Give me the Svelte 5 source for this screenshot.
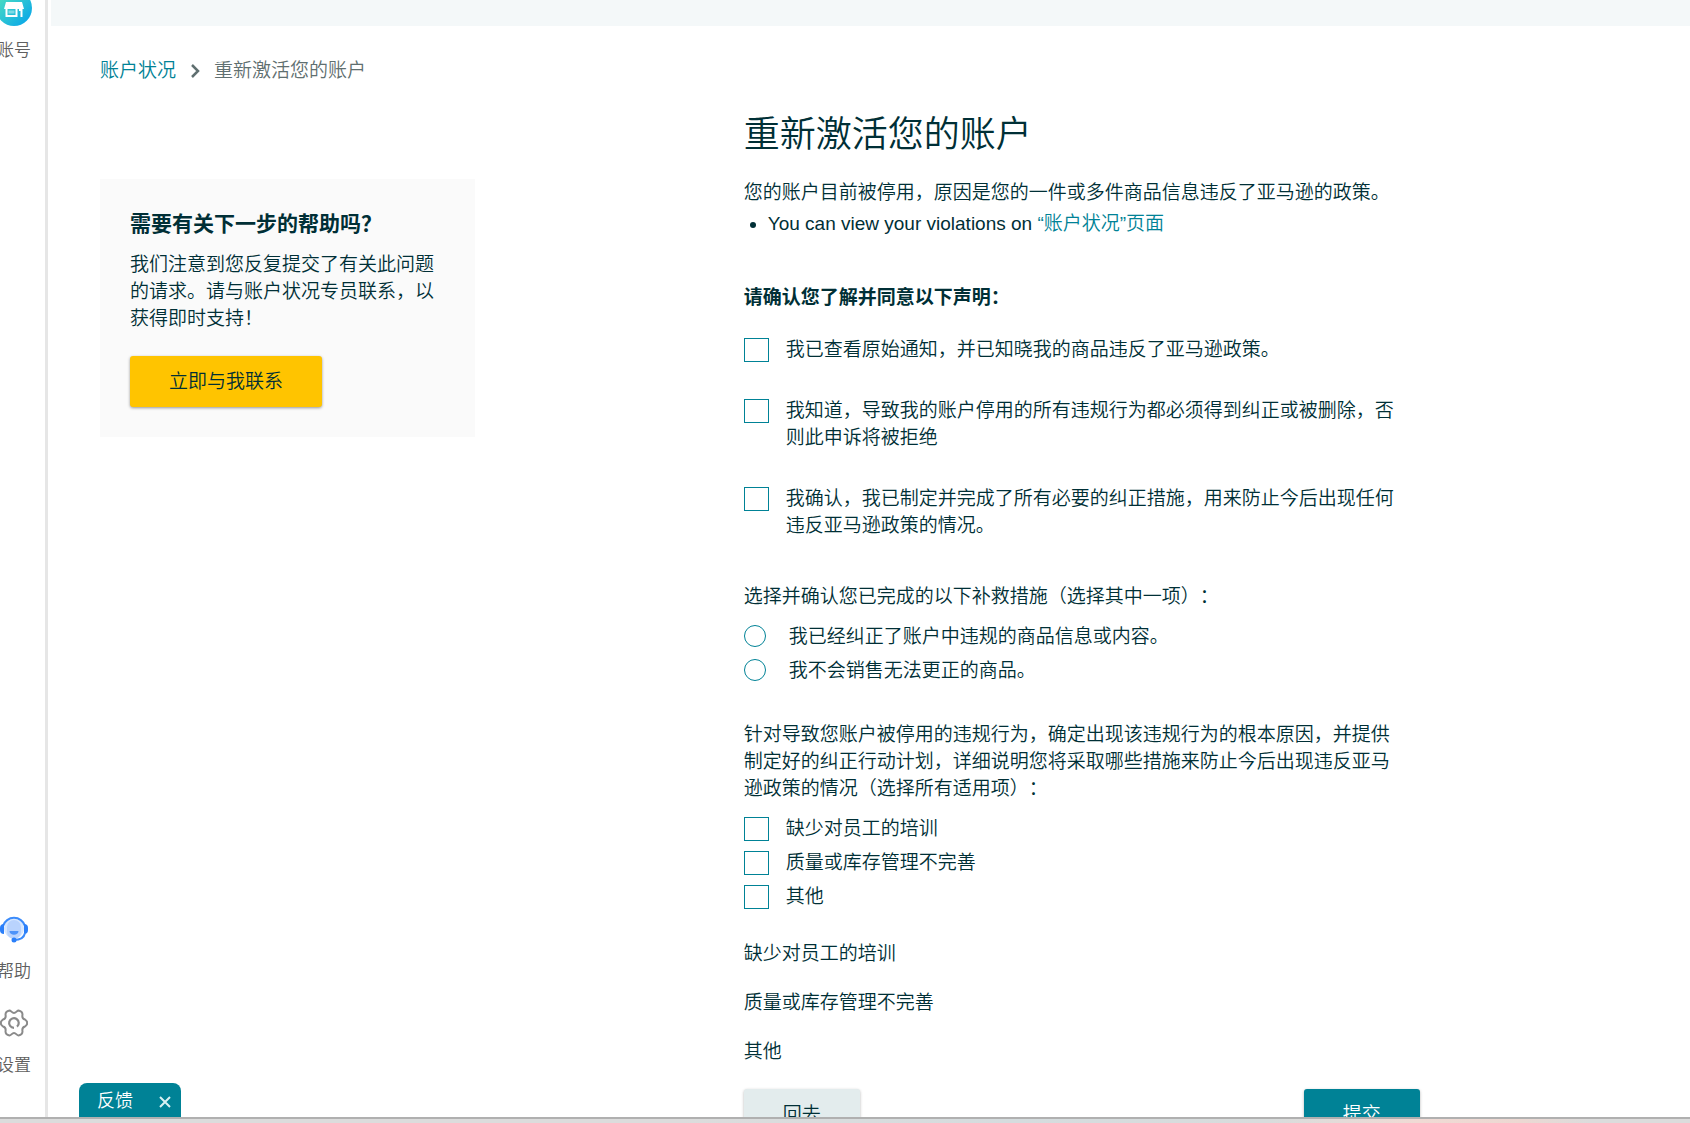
<script lang="ts">
	interface Option {
		id: string;
		text: string;
		checked: boolean;
	}

	let statements: Option[] = $state([
		{ id: 'reviewed', text: '我已查看原始通知，并已知晓我的商品违反了亚马逊政策。', checked: false },
		{
			id: 'corrected',
			text: '我知道，导致我的账户停用的所有违规行为都必须得到纠正或被删除，否则此申诉将被拒绝',
			checked: false
		},
		{
			id: 'prevented',
			text: '我确认，我已制定并完成了所有必要的纠正措施，用来防止今后出现任何违反亚马逊政策的情况。',
			checked: false
		}
	]);

	let causes: Option[] = $state([
		{ id: 'training', text: '缺少对员工的培训', checked: false },
		{ id: 'inventory', text: '质量或库存管理不完善', checked: false },
		{ id: 'other', text: '其他', checked: false }
	]);

	const remedies = [
		{ id: 'fixed', text: '我已经纠正了账户中违规的商品信息或内容。' },
		{ id: 'stopped', text: '我不会销售无法更正的商品。' }
	];

	let remedy = $state('');
	let showFeedback = $state(true);
</script>

<div class="app">
	<div class="workspace">
		<nav class="sidebar">
			<a href="#account">
				<svg class="account" viewBox="0 0 36 36" aria-hidden="true">
					<defs>
						<linearGradient id="shop" x1="0" y1="0" x2="1" y2="1">
							<stop offset="0.1" stop-color="#4fe0c0" />
							<stop offset="0.9" stop-color="#0aa8e8" />
						</linearGradient>
					</defs>
					<circle cx="18" cy="18" r="18" fill="url(#shop)" />
					<path d="M10 12h16l2 7H8z" fill="#fff" />
					<path d="M9.500 18h2v7h8v-6h2v8h-12zM23 18h3.500v9h-2v-6h-1.500z" fill="#fff" />
					<path d="M12.500 20.500h6v3h-6z" fill="#fff" opacity="0.4" />
				</svg>
				<span>账号</span>
			</a>
			<a href="#help" class="push">
				<svg viewBox="0 0 28 28" aria-hidden="true">
					<circle cx="14" cy="13.500" r="10" fill="#d6e6fe" />
					<path d="M7 12a7 7 0 0 1 14 0v5a7 7 0 0 1-14 0z" fill="#b9d3fd" />
					<path d="M3 11a11.500 11.500 0 0 1 22 0" fill="none" stroke="#3b8bfb" stroke-width="2" />
					<path d="M4 9v10a4 4 0 0 1-4-4v-2a4 4 0 0 1 4-4z" fill="#2b7ff9" />
					<path d="M24 9v10a4 4 0 0 0 4-4v-2a4 4 0 0 0-4-4z" fill="#2b7ff9" />
					<path d="M9.500 16h9c0 5-9 5-9 0z" fill="#4d93f9" />
					<path d="M25 18c-1 5-5 7-11 7" fill="none" stroke="#3b8bfb" stroke-width="2" />
					<circle cx="14" cy="25" r="2.500" fill="#2b7ff9" />
				</svg>
				<span>帮助</span>
			</a>
			<a href="#settings">
				<svg viewBox="0 0 28 28" aria-hidden="true">
					<path
						d="M9.500 1.500C11 1.500 12 4 14 4S17 1.500 18.500 1.500C21 2 22.500 4 22.500 5.500C22 8 23 10 25 10.500C27 12 27.500 13 27 14C27.500 15 27 16 25 17.500C23 18 22 20 22.500 22.500C22.500 24 21 26 18.500 26.500C17 26.500 16 24 14 24S11 26.500 9.500 26.500C7 26 5.500 24 5.500 22.500C6 20 5 18 3 17.500C1 16 .5 15 1 14C.5 13 1 12 3 10.500C5 10 6 8 5.500 5.500C5.500 4 7 2 9.500 1.500z"
						fill="none"
						stroke="#8a8a8a"
						stroke-width="2"
						stroke-linejoin="round"
					/>
					<path
						d="M17 17.700a4.800 4.800 0 1 0-3 1.100"
						fill="none"
						stroke="#8a8a8a"
						stroke-width="2.200"
					/>
				</svg>
				<span>设置</span>
			</a>
		</nav>

		<main>
			<div class="strip"></div>
			<nav class="breadcrumb">
				<a href="#health">账户状况</a>
				<svg viewBox="0 0 10 14" aria-hidden="true">
					<path d="M2 1l6 6-6 6" fill="none" stroke="#5f6f70" stroke-width="2.500" />
				</svg>
				<span>重新激活您的账户</span>
			</nav>

			<div class="columns">
				<aside>
					<h2>需要有关下一步的帮助吗？</h2>
					<p>我们注意到您反复提交了有关此问题的请求。请与账户状况专员联系，以获得即时支持！</p>
					<button class="contact" type="button">立即与我联系</button>
				</aside>

				<form onsubmit={(e) => e.preventDefault()}>
					<h1>重新激活您的账户</h1>
					<p>您的账户目前被停用，原因是您的一件或多件商品信息违反了亚马逊的政策。</p>
					<ul>
						<li>You can view your violations on <a href="#health">“账户状况”页面</a></li>
					</ul>

					<h3>请确认您了解并同意以下声明：</h3>
					<div class="statements">
						{#each statements as item (item.id)}
							<label>
								<input type="checkbox" bind:checked={item.checked} />
								<span>{item.text}</span>
							</label>
						{/each}
					</div>

					<fieldset>
						<legend>选择并确认您已完成的以下补救措施（选择其中一项）：</legend>
						{#each remedies as item (item.id)}
							<label class="radio">
								<input type="radio" name="remedy" value={item.id} bind:group={remedy} />
								<span>{item.text}</span>
							</label>
						{/each}
					</fieldset>

					<fieldset class="causes">
						<legend
							>针对导致您账户被停用的违规行为，确定出现该违规行为的根本原因，并提供制定好的纠正行动计划，详细说明您将采取哪些措施来防止今后出现违反亚马逊政策的情况（选择所有适用项）：</legend
						>
						{#each causes as item (item.id)}
							<label>
								<input type="checkbox" bind:checked={item.checked} />
								<span>{item.text}</span>
							</label>
						{/each}
					</fieldset>

					<div class="details">
						{#each causes as item (item.id)}
							<p>{item.text}</p>
						{/each}
					</div>

					<div class="actions">
						<button class="back" type="button">回去</button>
						<button class="submit" type="submit">提交</button>
					</div>
				</form>
			</div>
		</main>

		{#if showFeedback}
			<div class="feedback">
				<button type="button">反馈</button>
				<button type="button" aria-label="关闭" onclick={() => (showFeedback = false)}>
					<svg viewBox="0 0 12 12" aria-hidden="true">
						<path d="M1 1l10 10M11 1L1 11" stroke="#d9f0f2" stroke-width="2" />
					</svg>
				</button>
			</div>
		{/if}
	</div>
	<div class="edge"></div>
</div>

<style>
	:global(body) {
		margin: 0;
		background: #fff;
	}

	.app {
		display: flex;
		flex-direction: column;
		height: 100vh;
		overflow: hidden;
		color: #002f36;
		font-family: 'Liberation Sans', 'Noto Sans CJK SC', sans-serif;
		font-size: 19px;
		font-weight: 350;
		line-height: 27px;
		text-spacing-trim: space-all;
	}

	.workspace {
		position: relative;
		display: flex;
		flex: 1;
		min-height: 0;
		overflow: hidden;
	}

	a {
		color: #008296;
		text-decoration: none;
	}

	h1,
	h2,
	h3,
	p,
	ul {
		margin: 0;
	}

	button {
		border: 0;
		border-radius: 3px;
		padding: 0;
		color: inherit;
		font: inherit;
		cursor: pointer;
	}

	/* sidebar */
	.sidebar {
		display: flex;
		flex: none;
		flex-direction: column;
		gap: 24px;
		box-sizing: border-box;
		width: 65px;
		margin: -10px 0 0 -17px;
		padding-bottom: 38px;
		border-right: 3px solid #e6e6e6;
	}

	.sidebar a {
		display: flex;
		flex-direction: column;
		align-items: center;
		gap: 15px;
		color: #606060;
		font-size: 17px;
	}

	.sidebar svg {
		width: 28px;
		height: 28px;
	}

	.sidebar .account {
		width: 36px;
		height: 36px;
		margin-bottom: -4px;
	}

	.push {
		margin-top: auto;
	}

	/* page */
	main {
		flex: 1;
		margin-left: 3px;
	}

	.strip {
		height: 26px;
		background: #f4f8f9;
	}

	.breadcrumb {
		display: flex;
		align-items: center;
		gap: 14px;
		padding: 31px 45px 27px 49px;
		color: #5f6f70;
	}

	.breadcrumb svg {
		width: 10px;
		height: 14px;
	}

	.columns {
		display: grid;
		grid-template-columns: 5fr 7fr;
		align-items: start;
		padding: 0 45px 0 49px;
	}

	aside {
		box-sizing: border-box;
		max-width: 375px;
		margin-top: 68px;
		padding: 31px 30px 30px;
		background: #fafafa;
	}

	h2 {
		margin-bottom: 13px;
		font-size: 21px;
		font-weight: 700;
		line-height: 28px;
	}

	.contact {
		width: 192px;
		height: 51px;
		margin-top: 24px;
		background: #ffc400;
		box-shadow: 0 1px 3px rgba(0, 0, 0, 0.4);
	}

	form {
		max-width: 676px;
	}

	h1 {
		margin-bottom: 20px;
		font-size: 36px;
		font-weight: 350;
		line-height: 48px;
	}

	h3 {
		font-size: 19px;
		font-weight: 700;
	}

	ul {
		margin: 4px 0 47px;
		padding-left: 24px;
	}

	.statements {
		display: flex;
		flex-direction: column;
		gap: 34px;
		margin: 25px 0 44px;
	}

	label {
		display: flex;
		gap: 17px;
		max-width: 664px;
	}

	input {
		flex: none;
		box-sizing: border-box;
		width: 25px;
		height: 24px;
		margin: 2px 0 0;
		border: 1px solid #008296;
		background: #fff;
		appearance: none;
	}

	input:checked {
		background: #008296;
		box-shadow: inset 0 0 0 4px #fff;
	}

	.radio {
		gap: 23px;
	}

	.radio input {
		width: 22px;
		height: 22px;
		border-radius: 50%;
	}

	fieldset {
		display: flex;
		flex-direction: column;
		gap: 7px;
		min-width: 0;
		margin: 0 0 37px;
		padding: 0;
		border: 0;
	}

	legend {
		max-width: 664px;
		margin-bottom: 13px;
		padding: 0;
	}

	.causes {
		margin-bottom: 30px;
	}

	.details {
		display: flex;
		flex-direction: column;
		gap: 22px;
		margin-bottom: 24px;
	}

	.actions {
		display: flex;
		justify-content: space-between;
	}

	.actions button {
		width: 116px;
		height: 51px;
		box-shadow: 0 1px 3px rgba(0, 0, 0, 0.3);
	}

	.back {
		background: #e3eced;
	}

	.submit {
		background: #008296;
		color: #fff;
	}

	.feedback {
		position: absolute;
		bottom: 0;
		left: 79px;
		display: flex;
		align-items: center;
		justify-content: space-between;
		box-sizing: border-box;
		width: 102px;
		height: 34px;
		padding: 3px 10px 0 18px;
		border-radius: 8px 8px 0 0;
		background: #008296;
		color: #fff;
		font-size: 18px;
	}

	.feedback button {
		background: none;
	}

	.feedback svg {
		display: block;
		width: 12px;
		height: 12px;
	}

	.edge {
		flex: none;
		height: 4px;
		border-top: 2px solid #b0b0b0;
		background: linear-gradient(90deg, #dcdcdc 0 40%, #d5dcde 60%, #d8dcdc 75%, #f0dad4 84%, #ecd8d2 90%, #dcdcdc 94%);
	}
</style>
